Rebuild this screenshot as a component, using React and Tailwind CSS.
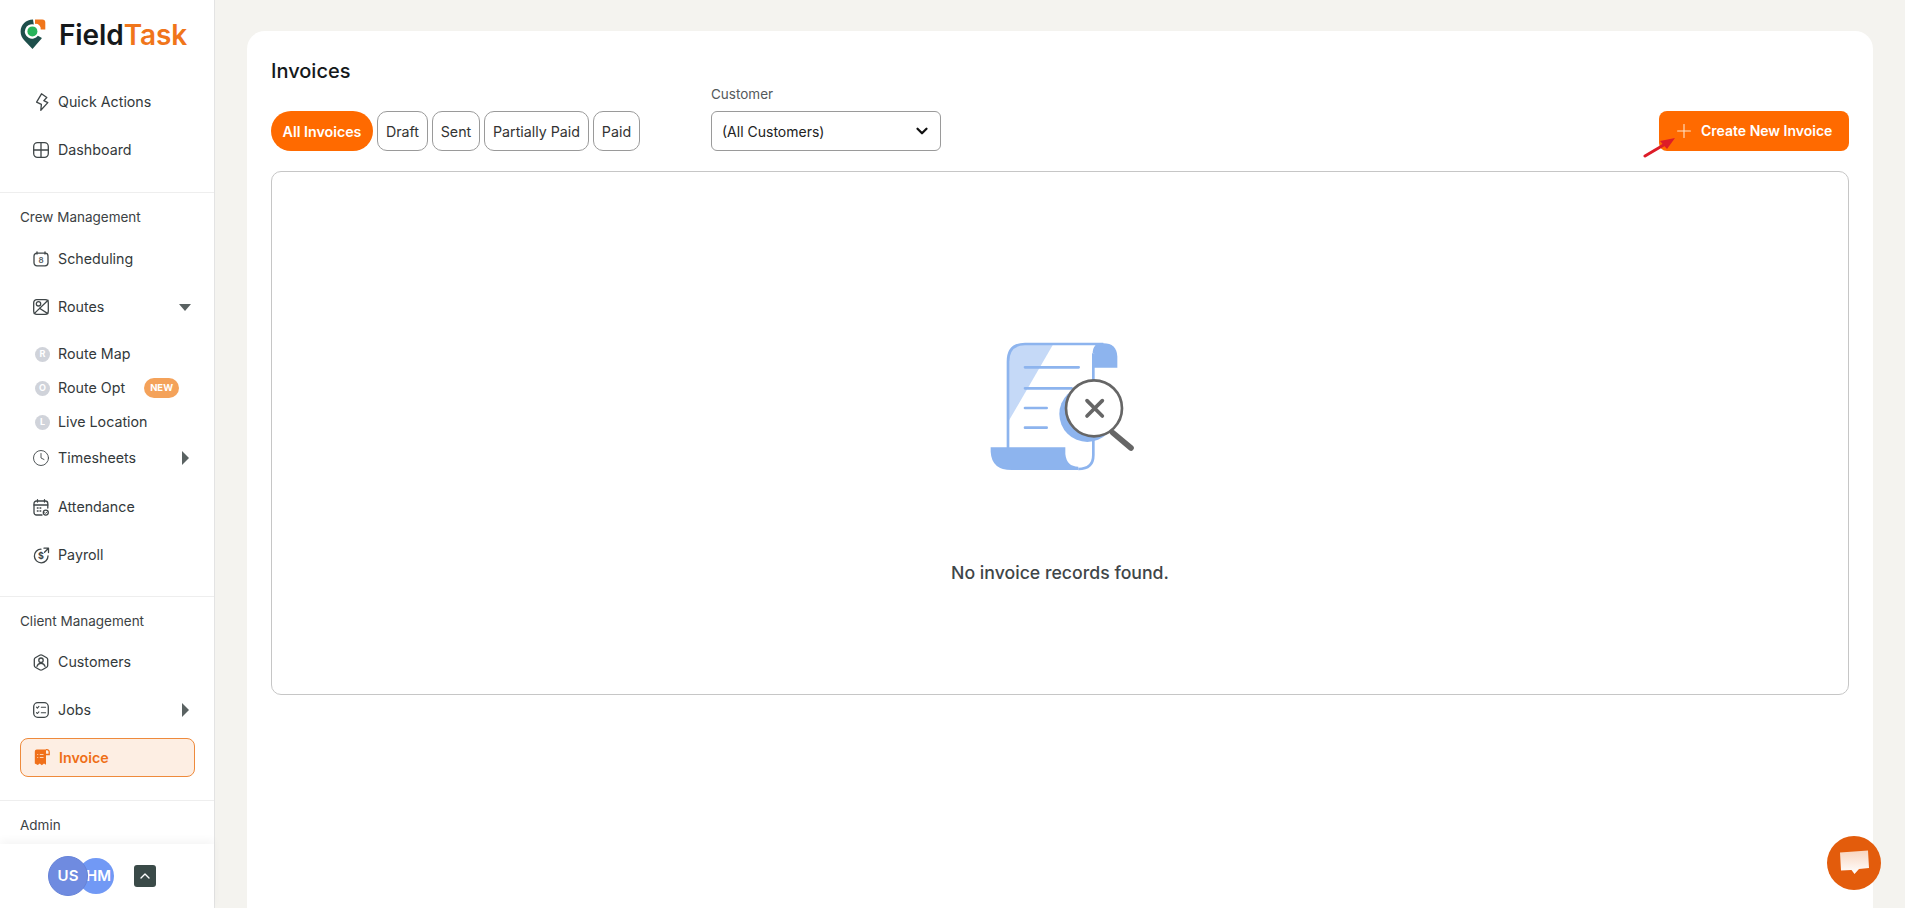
import React from "react";
import { Clock, ChevronDown, ChevronUp, Plus } from "lucide-react";

const S = { fill: "none", stroke: "#3f4648", strokeWidth: 1.3, strokeLinecap: "round", strokeLinejoin: "round" };

const Bolt = () => (
  <svg width="16" height="18" viewBox="0 0 16 18" {...S} className="ml-[1px]">
    <path d="M7.5 .8L12.8 4.5L9.8 7.6L13.8 9.6L6.8 17.2L7.4 11.4L2.6 9.2Z" />
  </svg>
);
const Grid = () => (
  <svg width="16" height="16" viewBox="0 0 16 16" {...S}>
    <rect x="0.7" y="0.7" width="14.6" height="14.6" rx="3.8" />
    <path d="M8 .7V15.3M.7 8H15.3" />
  </svg>
);
const Sched = () => (
  <svg width="16" height="16" viewBox="0 0 16 16" {...S}>
    <rect x="1" y="2.2" width="14" height="12.6" rx="3" />
    <path d="M4 .8V3M12 .8V3" />
    <text x="8" y="11.5" textAnchor="middle" fontSize="8" fontWeight="600" fill="#5a6062" stroke="none" fontFamily="Inter, sans-serif">8</text>
  </svg>
);
const RouteIcon = () => (
  <svg width="16" height="16" viewBox="0 0 16 16" {...S}>
    <rect x="0.7" y="0.7" width="14.6" height="14.6" rx="3" />
    <path d="M1.2 14.6L15 1.2M6.5 9.2L14.8 14.6" />
    <circle cx="5.5" cy="4.8" r="2.2" />
  </svg>
);
const Attend = () => (
  <svg width="16" height="17" viewBox="0 0 16 17" {...S}>
    <path d="M14.8 9V4.5a2.5 2.5 0 0 0-2.5-2.5H3.5A2.5 2.5 0 0 0 1 4.5v9A2.5 2.5 0 0 0 3.5 16H9" />
    <path d="M1 6H14.8M4.5.7V3M11.5.7V3" />
    <path d="M4.3 9h.8M7 9h.8M4.3 12h.8M7 12h.8" />
    <circle cx="12.8" cy="13.6" r="2.5" />
    <path d="M11.7 13.6l.8.8 1.4-1.4" strokeWidth="1" />
  </svg>
);
const Pay = () => (
  <svg width="17" height="17" viewBox="0 0 17 17" {...S}>
    <path d="M8 2.2A6.8 6.8 0 1 0 15 9" />
    <path d="M11 1.2h4.5v4.3M15.5 1.2L11.5 5.2" />
    <text x="8" y="12" textAnchor="middle" fontSize="9" fontWeight="700" fill="#3f4648" stroke="none" fontFamily="Inter, sans-serif">$</text>
  </svg>
);
const Cust = () => (
  <svg width="16" height="17" viewBox="0 0 16 17" {...S}>
    <path d="M6.7 1.2a2.6 2.6 0 0 1 2.6 0l4.4 2.5a2 2 0 0 1 1 1.7v6.2a2 2 0 0 1-1 1.7l-4.4 2.5a2.6 2.6 0 0 1-2.6 0l-4.4-2.5a2 2 0 0 1-1-1.7V5.4a2 2 0 0 1 1-1.7Z" />
    <circle cx="8" cy="6.2" r="2.2" />
    <path d="M4 12.4c.6-2.2 2-3 4-3s3.4.8 4 3" />
  </svg>
);
const Jobs = () => (
  <svg width="16" height="16" viewBox="0 0 16 16" {...S}>
    <rect x="0.7" y="0.7" width="14.6" height="14.6" rx="4" />
    <path d="M3.5 5.2l.9.9 1.5-1.7M8.3 5.3H12.6M3.5 10.6l.9.9 1.5-1.7M8.3 10.7H12.6" strokeWidth="1.1" />
  </svg>
);
const InvoiceIcon = () => (
  <svg width="16" height="17" viewBox="0 0 16 17">
    <path d="M.8 2.5A2 2 0 0 1 2.8.5H12v15.2l-2-1.2-2.2 1.8-2-1.8-2 1.4-3-1.4Z" fill="#f0701a" />
    <path d="M12 .8a2.4 2.4 0 0 1 3.2 2.2v2.5H12" fill="none" stroke="#f0701a" strokeWidth="1.3" />
    <path d="M3.2 5.5H4.2M5.8 5.5H9.5M3.2 8.5H4.2M5.8 8.5H9.5" stroke="#fbd3b5" strokeWidth="1" />
  </svg>
);
const Logo = () => (
  <svg width="26" height="31" viewBox="0 0 26 31" className="shrink-0">
    <path d="M13 .6C6 .6 .6 6 .6 12.6c0 3.4 1.3 6.3 3.6 8.6l8.3 8.9 7.6-8.8a12.6 12.6 0 0 0 1.8-2.2l-4-2.4A7.2 7.2 0 1 1 13.8 5.5Z" fill="#1e4f4b" />
    <circle cx="12.4" cy="12.4" r="5" fill="#27b35a" />
    <path d="M15 .4h7.3a3 3 0 0 1 3 3v7.2h-4.6a5 5 0 0 0-5.7-5.7Z" fill="#f0751a" />
  </svg>
);

const Tri = ({ down }) =>
  down ? (
    <span className="w-0 h-0 border-l-[6px] border-r-[6px] border-t-[7px] border-l-transparent border-r-transparent border-t-[#5a6262]" />
  ) : (
    <span className="w-0 h-0 mr-[2px] border-t-[7px] border-b-[7px] border-l-[7px] border-t-transparent border-b-transparent border-l-[#5a6262]" />
  );

const Item = ({ icon, label, right, h = "h-12", mb = "" }) => (
  <div className={`flex items-center ml-[33px] mr-[23px] ${h} ${mb}`}>
    <span className="w-[25px] shrink-0 flex">{icon}</span>
    <span className="text-[14.25px] text-[#33393b]">{label}</span>
    {right && <span className="ml-auto flex">{right}</span>}
  </div>
);

const Sub = ({ letter, label, badge }) => (
  <div className="relative flex items-center h-[34px] ml-[35px]">
    <span className="w-[15px] h-[15px] rounded-full bg-[#d0d3da] text-white text-[9px] font-bold flex items-center justify-center shrink-0">{letter}</span>
    <span className="ml-[8px] text-[14.25px] text-[#33393b]">{label}</span>
    {badge && (
      <span className="ml-[19px] w-[35px] h-[20px] rounded-full bg-[#f4a25a] text-white text-[9.5px] font-bold flex items-center justify-center">NEW</span>
    )}
  </div>
);

const Label = ({ children, cls = "" }) => (
  <div className={`ml-[20px] h-[20px] flex items-center text-[13.5px] text-[#3c4244] ${cls}`}>{children}</div>
);

const Sidebar = () => (
  <aside className="w-[215px] shrink-0 h-full bg-white border-r border-[#e3e3e3] flex flex-col relative">
    <div className="flex-1 min-h-0 overflow-hidden">
      <div className="h-[78px] pl-[20px] pt-[19px] flex items-start gap-[13px]">
        <Logo />
        <span className="text-[28px] font-semibold leading-[33px] tracking-[-0.1px] text-[#15191b]">
          Field<span className="text-[#f0751a]">Task</span>
        </span>
      </div>
      <div className="pb-[18px] border-b border-[#eeeeee]">
        <Item icon={<Bolt />} label="Quick Actions" />
        <Item icon={<Grid />} label="Dashboard" />
      </div>
      <div className="pt-[14px] pb-[17px] border-b border-[#eeeeee]">
        <Label cls="mb-[8px]">Crew Management</Label>
        <Item icon={<Sched />} label="Scheduling" />
        <Item icon={<RouteIcon />} label="Routes" right={<Tri down />} />
        <div className="pt-[6px] flex flex-col">
          <Sub letter="R" label="Route Map" />
          <Sub letter="O" label="Route Opt" badge />
          <Sub letter="L" label="Live Location" />
        </div>
        <Item icon={<Clock size={18} strokeWidth={1.2} color="#3f4648" className="-ml-[1px]" />} label="Timesheets" right={<Tri />} h="h-[38px]" mb="mb-[6px]" />
        <Item icon={<Attend />} label="Attendance" />
        <Item icon={<Pay />} label="Payroll" />
      </div>
      <div className="pt-[14px] pb-[23px] border-b border-[#eeeeee]">
        <Label cls="mb-[7px]">Client Management</Label>
        <Item icon={<Cust />} label="Customers" />
        <Item icon={<Jobs />} label="Jobs" right={<Tri />} />
        <div className="mt-[4px] mx-[20px] h-[39px] w-[175px] rounded-lg border border-[#ee8a3c] bg-[#fdeee3] flex items-center pl-[13px]">
          <span className="w-[25px] flex shrink-0"><InvoiceIcon /></span>
          <span className="text-[14.25px] font-semibold text-[#ef6f17]">Invoice</span>
        </div>
      </div>
      <div className="pt-[14px]">
        <Label>Admin</Label>
      </div>
    </div>
    <div className="h-[64px] shrink-0 bg-white shadow-[0_-4px_8px_rgba(0,0,0,0.04)] flex items-center pl-[48px] relative">
      <div className="w-[40px] h-[40px] rounded-full bg-[#6f8be0] border border-[#6683d8] text-white text-[15px] font-semibold flex items-center justify-center z-10 -mr-[10px]">US</div>
      <div className="w-[36px] h-[36px] rounded-full bg-[#7199f5] text-white text-[15px] font-semibold flex items-center justify-end pr-[3px] overflow-hidden">HM</div>
      <button className="ml-[20px] w-[22px] h-[22px] rounded-[3px] bg-[#3a4a48] text-white flex items-center justify-center">
        <ChevronUp size={16} strokeWidth={2} />
      </button>
    </div>
  </aside>
);

const Empty = () => (
  <svg width="210" height="170" viewBox="-45 0 630 510">
    <path d="M112 130 Q112 72 165 72 H250 L112 310 Z" fill="#c5d9f7" />
    <path d="M372 100 Q372 72 400 72 H165 Q114 72 114 125 V385" fill="none" stroke="#8db4ee" strokeWidth="8" />
    <path d="M370 100 V405 Q370 447 325 447" fill="none" stroke="#8db4ee" strokeWidth="8" />
    <path d="M372 143 H442 V110 Q440 70 400 70 Q372 72 372 110Z" fill="#8db4ee" />
    <path d="M62 382 H286 V402 Q290 440 325 440 V450 H125 Q65 450 62 395Z" fill="#8db4ee" />
    <path d="M165 142H326M165 205H305M165 264H230M165 323H230" stroke="#8db4ee" strokeWidth="8" strokeLinecap="round" />
    <circle cx="352" cy="282" r="84" fill="#8db4ee" />
    <path d="M428 338L483 384" stroke="#666" strokeWidth="17" strokeLinecap="round" />
    <circle cx="372" cy="265" r="84" fill="#fff" stroke="#666" strokeWidth="8" />
    <path d="M351 242L397 288M397 242L351 288" stroke="#666" strokeWidth="11" strokeLinecap="round" />
  </svg>
);

const Tab = ({ w, children, active }) => (
  <button
    className={
      active
        ? `${w} h-[40px] pt-[2px] rounded-full bg-[#ff6a00] text-white text-[14.25px] font-semibold flex items-center justify-center`
        : `${w} h-[40px] pt-[2px] rounded-[10px] border border-[#9a9a9a] bg-white text-[#333] text-[14.25px] flex items-center justify-center`
    }
  >
    {children}
  </button>
);

const Main = () => (
  <main className="flex-1 min-w-0 h-full bg-[#f4f3ef] pt-[31px] px-[32px]">
    <div className="h-full bg-white rounded-t-[18px] px-[24px] pt-[26px]">
      <h1 className="text-[20px] leading-[28px] font-medium text-[#15191b]">Invoices</h1>
      <div className="flex items-end">
        <div className="flex gap-[4px]">
          <Tab w="w-[102px]" active>All Invoices</Tab>
          <Tab w="w-[51px]">Draft</Tab>
          <Tab w="w-[48px]">Sent</Tab>
          <Tab w="w-[105px]">Partially Paid</Tab>
          <Tab w="w-[47px]">Paid</Tab>
        </div>
        <div className="ml-[71px]">
          <div className="text-[13.5px] leading-[18px] mb-[8px] text-[#55595b]">Customer</div>
          <div className="w-[230px] h-[40px] rounded-md border border-[#9a9a9a] flex items-center justify-between pl-[10px] pr-[9px] text-[14px] text-[#222]">
            (All Customers)
            <ChevronDown size={18} strokeWidth={3} color="#111" />
          </div>
        </div>
        <button className="relative ml-auto w-[190px] h-[40px] rounded-lg bg-[#ff6a00] text-white text-[14px] font-semibold flex items-center pl-[14px] pb-[1px]">
          <Plus size={22} strokeWidth={1.2} color="#ffe3c8" className="mr-[6px]" />
          Create New Invoice
          <svg width="36" height="24" viewBox="0 0 36 24" className="absolute left-[-16px] top-[24px]">
            <path d="M2 21L24 8" stroke="#dd1c28" strokeWidth="3" strokeLinecap="round" />
            <path d="M32 3L17 6L24 14Z" fill="#dd1c28" />
          </svg>
        </button>
      </div>
      <div className="mt-[20px] h-[524px] border border-[#c6c6c6] rounded-[10px] flex flex-col items-center pt-[148px]">
        <Empty />
        <p className="mt-[71px] text-[17.7px] leading-[24px] font-medium text-[#3f4648]">No invoice records found.</p>
      </div>
    </div>
  </main>
);

export default function App() {
  return (
    <div className="relative flex h-screen w-full overflow-hidden bg-white font-['Inter','Liberation_Sans',sans-serif]">
      <Sidebar />
      <Main />
      <button className="absolute right-[24px] bottom-[18px] w-[54px] h-[54px] rounded-full bg-[#e35c0c] flex items-center justify-center">
        <svg width="32" height="28" viewBox="0 0 32 28">
          <defs>
            <linearGradient id="b" x1="0" y1="0" x2="0" y2="1">
              <stop offset="0" stopColor="#f8d5bf" />
              <stop offset="1" stopColor="#ffffff" />
            </linearGradient>
          </defs>
          <path d="M2 3.5L30 1.5L31 19L21 20L16.5 25L13.5 21L3 21.5Z" fill="url(#b)" strokeLinejoin="round" />
        </svg>
      </button>
    </div>
  );
}
